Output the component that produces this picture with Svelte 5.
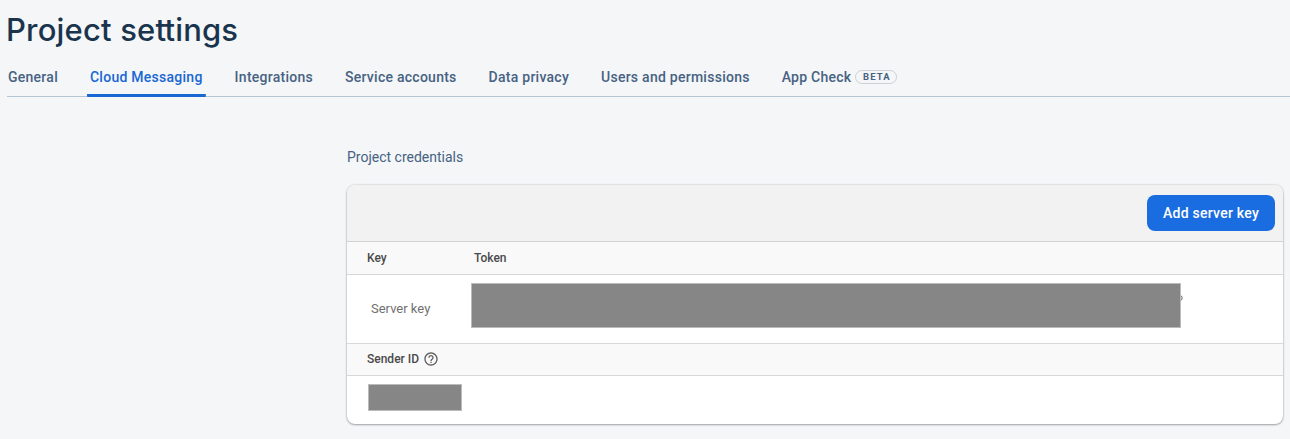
<script>
  const tabs = ['General', 'Cloud Messaging', 'Integrations', 'Service accounts', 'Data privacy', 'Users and permissions', 'App Check'];
  let active = $state('Cloud Messaging');
</script>

<main>
  <h1>Project se<span class="lig">t</span>tings</h1>
  <nav>
    {#each tabs as tab}
      <button class="tab" class:active={tab === active} onclick={() => (active = tab)}>
        <span>{tab}</span>{#if tab === 'App Check'}<span class="beta">BETA</span>{/if}
      </button>
    {/each}
  </nav>
  <section>
    <h2>Project credentials</h2>
    <div class="card">
      <div class="toolbar"><button class="add">Add server key</button></div>
      <div class="row head cols"><span>Key</span><span>Token</span></div>
      <div class="row server">
        <span class="name">Server key</span>
        <span class="mask token"></span>
        <svg class="tail" width="3" height="7" viewBox="0 0 3 7"><path d="M0 1.1h.2q.8 0 .8 1.4v1q0 1.4-.8 1.4H0" fill="none" stroke="#555" stroke-width="1" /></svg>
      </div>
      <div class="row head sender">
        <span>Sender ID</span>
        <svg width="16" height="16" viewBox="0 0 24 24" fill="#616161"><path d="M11 18h2v-2h-2v2zm1-16C6.48 2 2 6.48 2 12s4.48 10 10 10 10-4.48 10-10S17.52 2 12 2zm0 18c-4.41 0-8-3.59-8-8s3.59-8 8-8 8 3.59 8 8-3.59 8-8 8zm0-14c-2.21 0-4 1.79-4 4h2c0-1.1.9-2 2-2s2 .9 2 2c0 2-3 1.75-3 5h2c0-2.25 3-2.5 3-5 0-2.21-1.79-4-4-4z" /></svg>
      </div>
      <div class="row id"><span class="mask"></span></div>
    </div>
  </section>
</main>

<style>
  :global(body) { background: #f4f6f8; overflow: hidden; }
  main { box-sizing: border-box; height: 439px; padding-left: 7px; font-family: Roboto, sans-serif; background: #f4f6f8; }
  h1 { margin: 0 0 0 -1px; height: 60px; font: 500 31px/59px Inter, sans-serif; letter-spacing: 0.18px; color: #1a344e; white-space: nowrap; }
  .lig { letter-spacing: -1.6px; }
  nav { display: flex; gap: 26px; height: 36px; border-bottom: 1px solid #b3c5d5; }
  button { font-family: inherit; border: 0; cursor: pointer; }
  .tab { display: flex; align-items: center; height: 37px; padding: 0 3px 3px; background: none; border-bottom: 0; font-size: 14px; font-weight: 500; letter-spacing: 0.26px; line-height: 20px; color: #476282; white-space: nowrap; }
  .tab:first-child { padding-left: 1px; }
  .active { color: #1967d2; background: linear-gradient(#1967d2, #1967d2) bottom / 100% 3px no-repeat; border-radius: 0 0 1px 1px; }
  .beta { box-sizing: border-box; height: 14px; width: 42px; margin-left: 4px; border: 1px solid #ccd1d5; border-radius: 8px; font-size: 9.5px; line-height: 12px; font-weight: 700; letter-spacing: 1.1px; text-indent: 1px; text-align: center; }
  section { width: 936px; margin-left: 340px; padding-top: 50px; }
  h2 { margin: 0 0 18px; font-size: 14px; font-weight: 400; line-height: 20px; color: #476282; }
  .card { height: 239px; border-radius: 8px; overflow: hidden; background: #fff; box-shadow: 0 1px 2px rgba(60, 64, 67, .4), 0 0 2px rgba(60, 64, 67, .3); }
  .toolbar { display: flex; justify-content: flex-end; align-items: center; box-sizing: border-box; height: 57px; padding: 0 8px; background: #f2f2f2; border-bottom: 1px solid #d3d3d3; }
  .add { width: 128px; height: 36px; padding: 0; border-radius: 8px; background: #1a6de0; color: #fff; font-size: 14px; font-weight: 500; letter-spacing: 0.25px; }
  .row { box-sizing: border-box; display: flex; align-items: center; border-bottom: 1px solid #d8d8d8; }
  .head { background: #f9f9f9; padding-left: 20px; font-size: 12px; font-weight: 500; color: #4a4a4a; }
  .cols { display: grid; grid-template-columns: 107px 1fr; height: 33px; }
  .server { height: 69px; padding-left: 24px; align-items: flex-start; font-size: 13px; color: #707070; }
  .name { width: 100px; line-height: 68px; }
  .mask { box-sizing: border-box; background: #868686; border: 1px solid #bbb; }
  .token { width: 710px; height: 45px; margin-top: 8px; }
  .tail { margin-top: 20px; }
  .sender { height: 32px; gap: 4px; padding-bottom: 1px; }
  .id { height: 48px; border: 0; align-items: flex-start; padding: 8px 0 0 21px; }
  .id .mask { width: 94px; height: 27px; }
</style>
